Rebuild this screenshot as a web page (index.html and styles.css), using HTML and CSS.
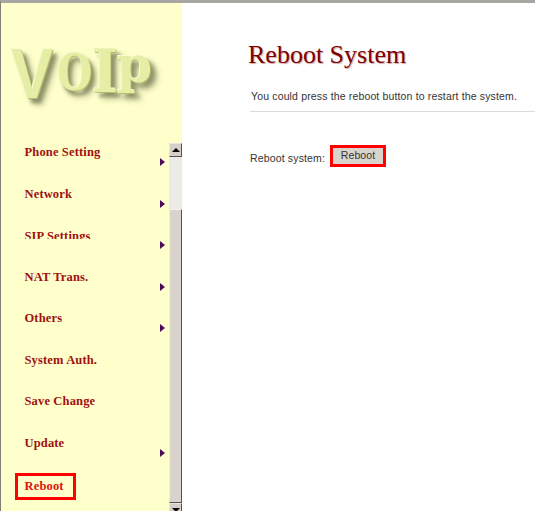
FILE: index.html
```html
<!DOCTYPE html>
<html lang="en">
<head>
    <meta charset="UTF-8">
    <meta name="viewport" content="width=device-width, initial-scale=1.0">
    <title>Reboot System</title>
    <link rel="stylesheet" href="styles.css">
</head>
<body>

<div class="container">
    <div class="sidebar">
        <div class="logo">
            <span class="logo-v">V</span><span class="logo-o">O</span><span class="logo-i">I</span><span class="logo-p">p</span>
        </div>
        <div class="menu-area">
            <div class="menu">
                <div class="menu-item"><a href="#">Phone Setting</a><span class="arrow"></span></div>
                <div class="menu-item"><a href="#">Network</a><span class="arrow"></span></div>
                <div class="menu-item"><a href="#" class="clipped">SIP Settings</a><span class="arrow"></span></div>
                <div class="menu-item"><a href="#">NAT Trans.</a><span class="arrow"></span></div>
                <div class="menu-item"><a href="#">Others</a><span class="arrow"></span></div>
                <div class="menu-item"><a href="#">System Auth.</a></div>
                <div class="menu-item"><a href="#">Save Change</a></div>
                <div class="menu-item"><a href="#">Update</a><span class="arrow"></span></div>
                <div class="menu-item"><a href="#" class="current">Reboot</a></div>
            </div>
            <div class="scrollbar">
                <div class="scroll-btn"><span class="tri-up"></span></div>
                <div class="scroll-track"></div>
                <div class="scroll-thumb"></div>
                <div class="scroll-btn"><span class="tri-down"></span></div>
            </div>
        </div>
    </div>

    <div class="content">
        <h1>Reboot System</h1>
        <p class="intro">You could press the reboot button to restart the system.</p>
        <hr>
        <div class="form-row">
            <span class="form-label">Reboot system:</span>
            <span class="highlight"><button>Reboot</button></span>
        </div>
    </div>
</div>

</body>
</html>
```

FILE: styles.css
```css
* {
    margin: 0;
    padding: 0;
    box-sizing: border-box;
}

html, body {
    height: 511px;
    overflow: hidden;
    background-color: #ffffff;
}

.container {
    display: flex;
    height: 100%;
    border-top: 3px solid #a6a6a2;
    border-left: 1px solid #7f7f78;
}

.sidebar {
    width: 181px;
    flex-shrink: 0;
    background-color: #ffffcc;
    display: flex;
    flex-direction: column;
}

.logo {
    height: 140px;
    padding: 36px 0 0 10px;
    display: flex;
    font-family: "DejaVu Serif", serif;
    font-weight: bold;
    color: #e6eea6;
    text-shadow: -1px -1px 0 #f8fad0, 1px 1px 0 #b4bc70, 5px 5px 4px #8f9468, 7px 7px 7px #c4c79a;
}

.logo span {
    display: block;
    line-height: 70px;
}

.logo-v {
    font-family: "Liberation Sans", sans-serif;
    font-size: 70px;
    width: 43px;
    transform: scaleX(0.9);
    transform-origin: left center;
}

.logo-o {
    font-size: 50px;
    width: 33px;
    transform: translateY(-1px) scaleX(0.8);
}

.logo-i {
    font-size: 60px;
    width: 32px;
    text-align: center;
    transform: translate(2px, -3px) scaleX(0.95);
}

.logo-p {
    font-size: 50px;
    transform: translate(-2px, -9px);
}

.menu-area {
    flex: 1;
    display: flex;
    min-height: 0;
}

.menu {
    flex: 1;
    min-width: 0;
}

.menu-item {
    height: 41.5px;
    padding: 1px 4px 0 23.5px;
    display: flex;
    justify-content: space-between;
    font-family: "Liberation Serif", serif;
    font-size: 12.5px;
    font-weight: bold;
    letter-spacing: 0.15px;
}

.menu-item a {
    color: #a01010;
    text-decoration: none;
    line-height: 16px;
    height: 16px;
}

.menu-item a.clipped {
    height: 11px;
    margin-top: 1px;
    overflow: hidden;
}

.menu-item a.current {
    color: #e01010;
    border: 3px solid #ff0000;
    height: 27px;
    line-height: 21px;
    margin: -3px 0 0 -10px;
    padding: 0 9px 0 7px;
}

.arrow {
    width: 0;
    height: 0;
    margin-top: 14px;
    border-left: 5px solid #4b0a5a;
    border-top: 4px solid transparent;
    border-bottom: 4px solid transparent;
}

.scrollbar {
    width: 13px;
    display: flex;
    flex-direction: column;
    flex-shrink: 0;
}

.scroll-btn {
    height: 14px;
    background-color: #d4d0c8;
    border: 1px solid #e8e6e0;
    border-right-color: #55534f;
    border-bottom-color: #55534f;
    display: flex;
    align-items: center;
    justify-content: center;
    flex-shrink: 0;
}

.tri-up {
    border-left: 4px solid transparent;
    border-right: 4px solid transparent;
    border-bottom: 4px solid #000000;
}

.tri-down {
    border-left: 4px solid transparent;
    border-right: 4px solid transparent;
    border-top: 4px solid #000000;
}

.scroll-track {
    height: 52px;
    background-color: #ecebe8;
    flex-shrink: 0;
}

.scroll-thumb {
    height: 294px;
    flex-shrink: 0;
    background-color: #d8d4cc;
    border-top: 1px solid #f2f0ec;
    border-left: 1px solid #f2f0ec;
    border-right: 1px solid #55534f;
    border-bottom: 1px solid #55534f;
}

.content {
    flex: 1;
    min-width: 0;
    padding: 37px 0 0 66px;
    font-family: "Liberation Sans", sans-serif;
    font-size: 10.5px;
    letter-spacing: 0.15px;
    color: #333333;
}

h1 {
    font-family: "Liberation Serif", serif;
    font-size: 26px;
    font-weight: normal;
    line-height: 30px;
    letter-spacing: 0;
    color: #800000;
    text-shadow: 1px 1px 1px #c9a8a8;
}

.intro {
    margin: 19px 0 0 3px;
    line-height: 14px;
}

hr {
    margin: 8px 0 0 2px;
    border: none;
    border-top: 1px solid #dcdcd4;
}

.form-row {
    margin: 33px 0 0 2px;
    display: flex;
    gap: 5px;
}

.form-label {
    margin-top: 7px;
}

.highlight {
    display: block;
    border: 3px solid #ff0000;
    width: 56px;
    height: 22px;
}

button {
    display: block;
    width: 100%;
    height: 100%;
    border: none;
    background-color: #d8d4cc;
    font-family: "Liberation Sans", sans-serif;
    font-size: 10.5px;
    letter-spacing: 0.15px;
    color: #333333;
    padding-bottom: 3px;
}
```
